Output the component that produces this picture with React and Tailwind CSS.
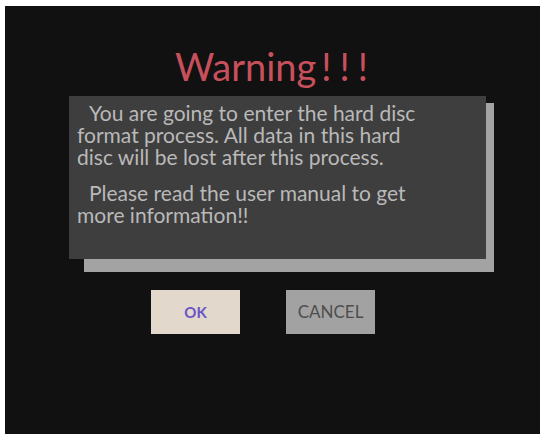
const lines1 = ["You are going to enter the hard disc", "format process. All data in this hard", "disc will be lost after this process."];
const lines2 = ["Please read the user manual to get", "more information!!"];

export default function App() {
  return (
    <div className="w-[543px] h-[434px] bg-white overflow-hidden" style={{ fontFamily: "Lato, 'DejaVu Sans', sans-serif" }}>
      <div className="ml-[5px] mr-[3px] mt-[6px] h-[428px] bg-[#111111] flex flex-col">
        <div className="h-[90px] flex items-end justify-center pb-[8px]">
          <div className="text-[38px] leading-[44px] text-[#c8505c] ml-[6px]">
            Warning<span className="tracking-[8px] ml-[5px]">!!!</span>
          </div>
        </div>
        <div className="relative ml-[64px] w-[417px] h-[163px]">
          <div className="absolute left-[15px] top-[7px] w-[410px] h-[169px] bg-[#a3a3a3]" />
          <div className="relative h-full bg-[#3e3e3e] pl-[8px] pt-[6px] text-[21px] text-[#b9b9b9] whitespace-nowrap flex flex-col">
            {lines1.map((l, i) => (
              <div key={l} className={`h-[22px] leading-[22px] ${i === 0 ? "pl-[12px]" : ""}`}>{l}</div>
            ))}
            <div className="h-[14px]" />
            {lines2.map((l, i) => (
              <div key={l} className={`h-[22px] leading-[22px] ${i === 0 ? "pl-[12px]" : ""}`}>{l}</div>
            ))}
          </div>
        </div>
        <div className="flex ml-[146px] mt-[31px] gap-[46px]">
          <div className="w-[89px] h-[44px] bg-[#e2d8cb] flex items-center justify-center text-[15px] font-bold text-[#6a55c8]">OK</div>
          <div className="w-[89px] h-[44px] bg-[#a2a2a2] flex items-center justify-center text-[17px] text-[#4e4e4e]">CANCEL</div>
        </div>
      </div>
    </div>
  );
}
